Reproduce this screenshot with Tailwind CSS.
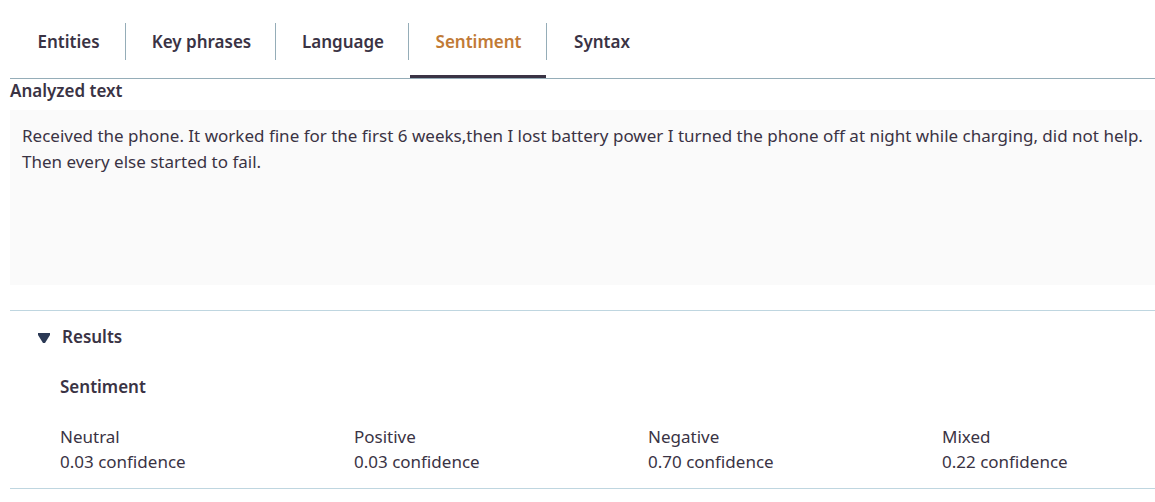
<!DOCTYPE html>
<html lang="en">
<head>
<meta charset="utf-8">
<meta name="viewport" content="width=device-width, initial-scale=1">
<title>Text analysis</title>
<script src="https://cdn.jsdelivr.net/npm/@tailwindcss/browser@4"></script>
</head>
<body class="bg-white pl-[10px] font-['Noto_Sans','Open_Sans',sans-serif] text-[17px] text-[#3a3344]">
<div role="tablist" aria-label="Insights" class="flex border-b border-[#95adb8] pt-[23px] font-semibold leading-[37px]">
  <button type="button" role="tab" aria-selected="false" class="w-[116px] pb-[18px]"><span class="block h-[37px] border-r border-[#95adb8] pl-[2px]">Entities</span></button>
  <button type="button" role="tab" aria-selected="false" class="w-[150px] pb-[18px]"><span class="block h-[37px] border-r border-[#95adb8] pl-[2px]">Key phrases</span></button>
  <button type="button" role="tab" aria-selected="false" class="w-[133px] pb-[18px]"><span class="block h-[37px] border-r border-[#95adb8] pl-[2px]">Language</span></button>
  <button type="button" role="tab" aria-selected="true" class="w-[138px] text-[#c17a36]"><span class="block h-[37px] border-r border-[#95adb8] pl-[2px]">Sentiment</span><span class="mx-px mt-[15px] block h-[3px] bg-[#3a3344]"></span></button>
  <button type="button" role="tab" aria-selected="false" class="w-[110px] pb-[18px]"><span class="block h-[37px]">Syntax</span></button>
</div>
<main>
  <h2 class="font-semibold leading-6">Analyzed text</h2>
  <p class="mt-[7px] min-h-[175px] bg-[#fafafa] py-[13px] pr-2 pl-3 leading-[26px]">Received the phone. It worked fine for the first 6 weeks,then I lost battery power I turned the phone off at night while charging, did not help. Then every else started to fail.</p>
  <section class="mt-[25px] border-y border-[#bfd6e0] py-[14px]">
    <button type="button" aria-expanded="true" class="flex items-center gap-3 pl-7 font-semibold leading-6">
      <svg class="mt-[2px] h-[10px] w-3" viewBox="0 0 12 10" aria-hidden="true"><path d="M0 0h12v2L7 10H5L0 2z" fill="#2b3955"/></svg>
      Results
    </button>
    <div class="pl-[50px]">
      <h3 class="mt-[26px] font-semibold leading-6">Sentiment</h3>
      <dl class="mt-[25px] grid grid-cols-[repeat(3,minmax(0,294px))_1fr] leading-[25px]">
        <div><dt>Neutral</dt><dd>0.03 confidence</dd></div>
        <div><dt>Positive</dt><dd>0.03 confidence</dd></div>
        <div><dt>Negative</dt><dd>0.70 confidence</dd></div>
        <div><dt>Mixed</dt><dd>0.22 confidence</dd></div>
      </dl>
    </div>
  </section>
</main>
</body>
</html>
